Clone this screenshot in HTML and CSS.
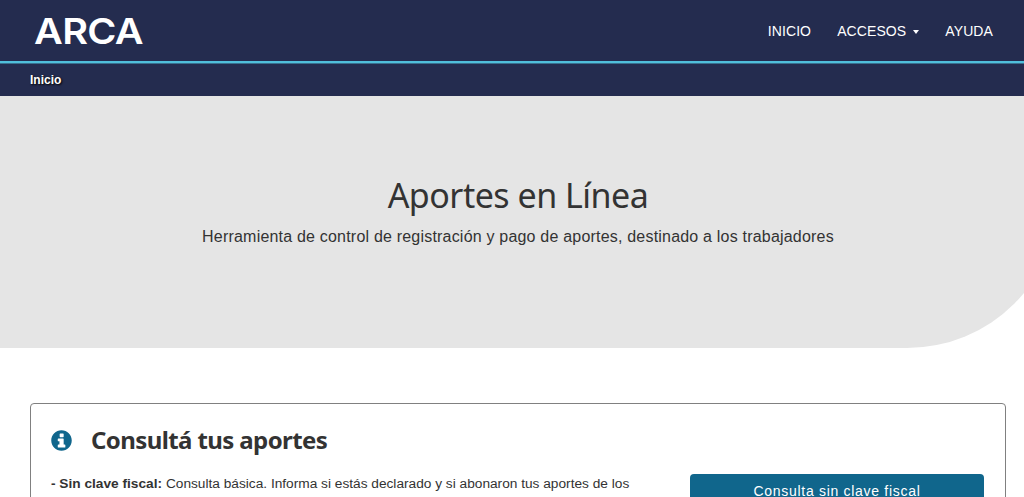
FILE: index.html
```html
<!DOCTYPE html>
<html lang="es">
<head>
<meta charset="utf-8">
<title>Aportes en Línea</title>
<link rel="stylesheet" href="styles.css">
</head>
<body>
<header class="topbar">
  <a class="logo">ARCA</a>
  <nav class="menu">
    <a class="menu-item">INICIO</a>
    <a class="menu-item">ACCESOS<span class="caret"></span></a>
    <a class="menu-item">AYUDA</a>
  </nav>
</header>
<div class="crumbs"><span class="crumb">Inicio</span></div>
<section class="hero">
  <h1 class="hero-title">Aportes en Línea</h1>
  <p class="hero-sub">Herramienta de control de registración y pago de aportes, destinado a los trabajadores</p>
</section>
<main class="content">
  <section class="card">
    <h2 class="card-title">
      <svg class="info-icon" viewBox="0 0 512 512" aria-hidden="true"><path fill-rule="evenodd" d="M256 6C118 6 6 118 6 256s112 250 250 250 250-112 250-250S394 6 256 6zM226 88h68c9 0 15 6 15 15v56c0 9-6 15-15 15h-68c-9 0-15-6-15-15v-56c0-9 6-15 15-15zm-46 118h114c9 0 15 6 15 15v130h26c9 0 15 6 15 15v46c0 9-6 15-15 15H180c-9 0-15-6-15-15v-46c0-9 6-15 15-15h26v-76h-26c-9 0-15-6-15-15v-39c0-9 6-15 15-15z"/></svg>
      <span>Consultá tus aportes</span>
    </h2>
    <div class="card-body">
      <p class="card-text"><strong>- Sin clave fiscal:</strong> Consulta básica. Informa si estás declarado y si abonaron tus aportes de los</p>
      <a class="btn">Consulta sin clave fiscal</a>
    </div>
  </section>
</main>
</body>
</html>
```
FILE: styles.css
```css
* { box-sizing: border-box; }
html, body { margin: 0; height: 497px; overflow: hidden; background: #fff; }
body { font-family: "Liberation Sans", Arial, sans-serif; color: #333; }

.topbar {
  height: 63px;
  background: #242c4f;
  border-bottom: 2px solid #50bfdb;
  display: flex;
  align-items: center;
  justify-content: space-between;
  padding: 0 31px 0 34px;
}
.logo {
  font-family: Inter, "Liberation Sans", sans-serif;
  font-weight: 600;
  font-size: 36px;
  line-height: 1;
  letter-spacing: -0.6px;
  color: #fff;
  transform: scaleX(1.1);
  transform-origin: left center;
}
.menu { display: flex; gap: 26px; }
.menu-item { font-size: 14px; color: #fff; letter-spacing: 0.1px; }
.caret {
  display: inline-block;
  margin-left: 7px;
  vertical-align: middle;
  border-top: 4px solid #fff;
  border-left: 3px solid transparent;
  border-right: 3px solid transparent;
}

.crumbs {
  height: 33px;
  background: #242c4f;
  border-top: 1px solid #38718f;
  display: flex;
  align-items: center;
  padding-left: 30px;
}
.crumb {
  font-size: 12px;
  font-weight: 700;
  color: #fff;
  text-shadow: 1px 1px 2px #000;
}

.hero {
  height: 252px;
  margin-right: -35px;
  padding: 77px 23px 0 0;
  background: #e5e5e5;
  border-bottom-right-radius: 152px;
  display: flex;
  flex-direction: column;
  align-items: center;
}
.hero-title {
  margin: 0;
  font-family: "Noto Sans", sans-serif;
  font-weight: 400;
  font-size: 34px;
  line-height: 44px;
  letter-spacing: -0.5px;
  color: #333;
}
.hero-sub {
  margin: 9px 0 0;
  font-size: 16px;
  line-height: 22px;
  letter-spacing: 0.2px;
  color: #333;
}

.content { padding: 55px 18px 0 30px; }
.card {
  border: 1px solid #808080;
  border-radius: 4px;
  padding: 20px 21px 20px 20px;
  height: 160px;
}
.card-title {
  margin: 0;
  display: flex;
  align-items: center;
  gap: 19px;
  font-family: "Noto Sans", sans-serif;
  font-weight: 700;
  font-size: 24px;
  line-height: 32px;
  letter-spacing: -0.6px;
  color: #333;
}
.info-icon { width: 21px; height: 21px; fill: #10668c; }
.card-body {
  display: flex;
  justify-content: space-between;
  align-items: flex-start;
  margin-top: 18px;
}
.card-text {
  margin: 0;
  width: 590px;
  font-size: 13.7px;
  line-height: 20px;
  color: #333;
}
.btn {
  flex: none;
  width: 294px;
  height: 40px;
  background: #10668c;
  border-radius: 4px;
  color: #fff;
  font-size: 14px;
  letter-spacing: 0.7px;
  text-align: center;
  line-height: 34px;
}
```
